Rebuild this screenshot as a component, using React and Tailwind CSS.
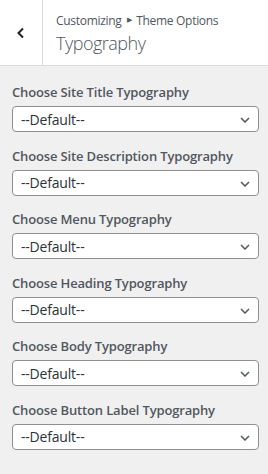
import React from "react";

const fields = [
  "Choose Site Title Typography",
  "Choose Site Description Typography",
  "Choose Menu Typography",
  "Choose Heading Typography",
  "Choose Body Typography",
  "Choose Button Label Typography",
];

function Chevron() {
  return (
    <svg width="10" height="6" viewBox="0 0 10 6" className="absolute right-[8px] top-[10px] pointer-events-none">
      <path d="M1 1 L5 5 L9 1" fill="none" stroke="#50575e" strokeWidth="1.5" />
    </svg>
  );
}

export default function App() {
  return (
    <div className="w-[268px] h-[474px] bg-[#f0f0f1] font-['Open_Sans',sans-serif] overflow-hidden">
      {/* HEADER */}
      <div className="flex h-[66px] bg-white border-b border-[#dcdcde]">
        <button className="w-[43px] flex items-center justify-center border-r border-[#dcdcde]">
          <svg width="10" height="12" viewBox="0 0 10 12">
            <path d="M7 1.5 L2.5 6 L7 10.5" fill="none" stroke="#1d2327" strokeWidth="2" />
          </svg>
        </button>
        <div className="pl-[13px] pt-[12px]">
          <div className="text-[12px] leading-[18px] tracking-[-0.3px] text-[#50575e] flex items-center">
            Customizing
            <span className="text-[7px] mx-[5px] relative top-[-1px]">▶</span>
            Theme Options
          </div>
          <div className="text-[18px] leading-[26px] tracking-[-0.5px] text-[#50575e] font-light">Typography</div>
        </div>
      </div>

      {/* FIELDS */}
      <div className="pt-[16px]">
        {fields.map((f) => (
          <div key={f} className="pl-[12px] mb-[13.6px]">
            <div className="text-[13px] leading-[20px] tracking-[-0.15px] font-semibold text-[#50575e] mb-[4px]">{f}</div>
            <div className="relative w-[247px] h-[26px] bg-white border border-[#8c8f94] rounded-[4px] flex items-center pl-[8px] text-[14px] tracking-[-0.2px] text-[#2c3338]">
              --Default--
              <Chevron />
            </div>
          </div>
        ))}
      </div>
    </div>
  );
}
